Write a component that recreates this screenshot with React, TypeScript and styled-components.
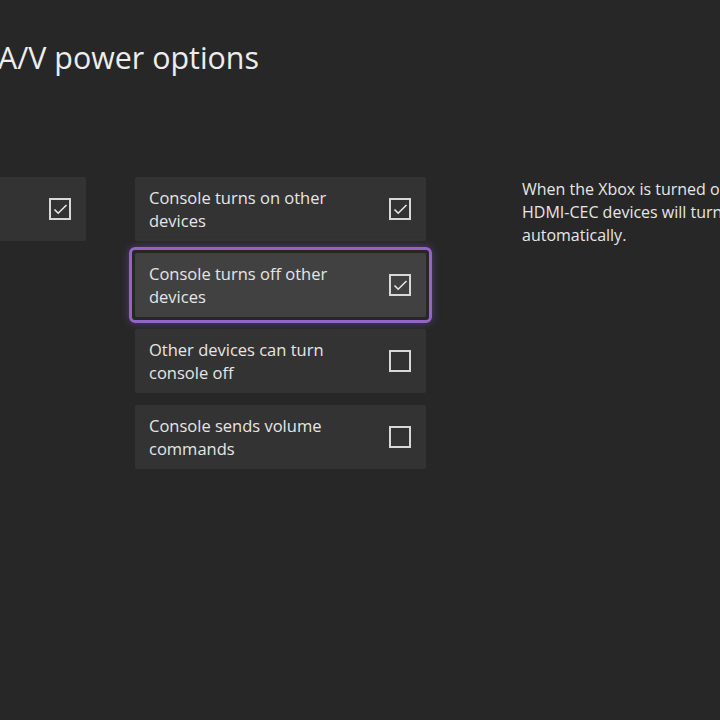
import { createGlobalStyle } from "styled-components";
import styled from "styled-components";

const GlobalStyle = createGlobalStyle`
  html, body {
    margin: 0;
    padding: 0;
    background: #272727;
    overflow: hidden;
  }
  body {
    font-family: "Open Sans", "Noto Sans", sans-serif;
    color: #e8e8e8;
  }
`;

const Page = styled.div`
  width: 720px;
  height: 720px;
  overflow: hidden;
`;

const Title = styled.h1`
  margin: 0;
  padding-top: 38px;
  margin-left: -2px;
  font-size: 30.4px;
  font-weight: 400;
  line-height: 40px;
  white-space: nowrap;
  color: #ededed;
`;

const Columns = styled.div`
  display: flex;
  align-items: flex-start;
  margin-top: 99px;
  margin-left: -205px;
  gap: 49px;
`;

const Column = styled.div`
  display: flex;
  flex-direction: column;
  gap: 12px;
  width: 291px;
  flex-shrink: 0;
`;

const Card = styled.div<{ $focused?: boolean }>`
  position: relative;
  height: 64px;
  box-sizing: border-box;
  display: flex;
  align-items: center;
  justify-content: space-between;
  padding: 0 15px 0 14px;
  border-radius: 2px;
  background: ${(p) => (p.$focused ? "#414141" : "#333333")};

  ${(p) =>
    p.$focused &&
    `
    &::after {
      content: "";
      position: absolute;
      inset: -6px;
      border: 3px solid #9265c6;
      border-radius: 6px;
      box-shadow: 0 0 8px rgba(140, 90, 200, 0.45);
      pointer-events: none;
    }
  `}
`;

const Label = styled.div`
  font-size: 16.5px;
  line-height: 23px;
  color: #e6e6e6;
  max-width: 220px;
`;

const Box = styled.div`
  width: 22px;
  height: 22px;
  box-sizing: border-box;
  border: 2px solid #d8d8d8;
  display: flex;
  align-items: center;
  justify-content: center;
  flex-shrink: 0;
`;

const Description = styled.div`
  margin-left: 47px;
  margin-top: 1px;
  font-size: 16px;
  line-height: 23px;
  color: #e6e6e6;
  white-space: nowrap;
`;

const Check = ({ checked }: { checked: boolean }) => (
  <Box>
    {checked && (
      <svg width="15" height="12" viewBox="0 0 15 12">
        <path d="M1.5 6.5 L5.2 10.2 L13.5 2" fill="none" stroke="#e6e6e6" strokeWidth="1.6" />
      </svg>
    )}
  </Box>
);

const options = [
  { label: "Console turns on other devices", checked: true },
  { label: "Console turns off other devices", checked: true, focused: true },
  { label: "Other devices can turn console off", checked: false },
  { label: "Console sends volume commands", checked: false },
];

export default function App() {
  return (
    <Page>
      <GlobalStyle />
      <Title>A/V power options</Title>
      <Columns>
        <Column>
          <Card>
            <Label />
            <Check checked />
          </Card>
        </Column>
        <Column>
          {options.map((o) => (
            <Card key={o.label} $focused={o.focused}>
              <Label>{o.label}</Label>
              <Check checked={o.checked} />
            </Card>
          ))}
        </Column>
        <Description>
          When the Xbox is turned on,
          <br />
          HDMI-CEC devices will turn on
          <br />
          automatically.
        </Description>
      </Columns>
    </Page>
  );
}
